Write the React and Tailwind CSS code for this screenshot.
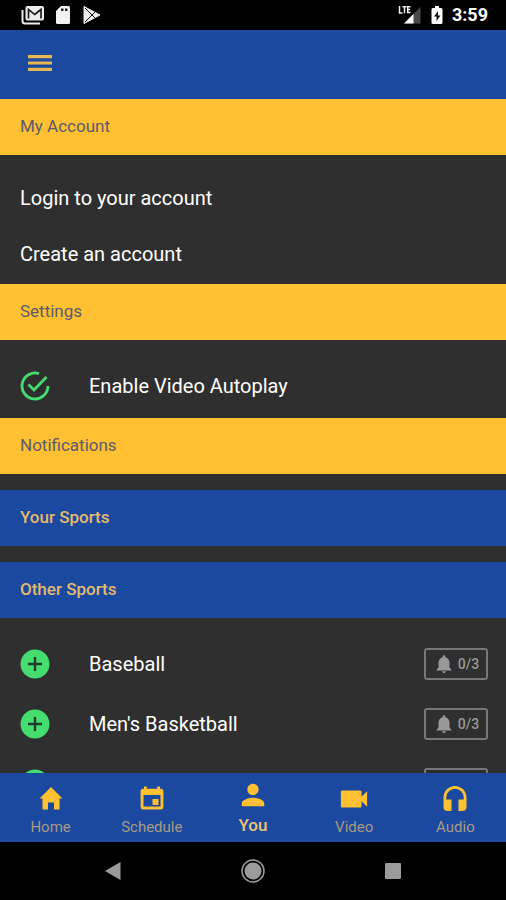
import React, { useState } from "react";
import { IoMdPerson, IoMdVideocam } from "react-icons/io";
import { MdNotifications } from "react-icons/md";

const SPORTS = ["Baseball", "Men's Basketball", "Women's Basketball"];

function HomeIcon(props) {
    return (
        <svg width="30" height="30" viewBox="0 0 30 30" fill="currentColor" {...props}>
            <path d="M15 3L3.500 14.600h3V25.500H12V18.500h6v7h5.500V14.600h3z" />
        </svg>
    );
}

function CalendarIcon(props) {
    return (
        <svg width="30" height="30" viewBox="0 0 30 30" fill="currentColor" {...props}>
            <path
                fillRule="evenodd"
                d="M7 2.500h2.800v2.200h10.400V2.500H23v2.200h1a2.400 2.400 0 0 1 2.400 2.400v16A2.400 2.400 0 0 1 24 25.500H6a2.400 2.400 0 0 1-2.400-2.400v-16A2.400 2.400 0 0 1 6 4.700h1zM6.500 11v11.600h17V11z"
            />
            <rect x="15.500" y="15" width="6" height="6" rx="0.500" />
        </svg>
    );
}

function HeadphonesIcon(props) {
    return (
        <svg width="30" height="30" viewBox="0 0 30 30" fill="currentColor" {...props}>
            <path d="M15 2C8.600 2 3.500 7.100 3.500 13.500v9.500a4 4 0 0 0 4 4h4V15.500H6.300v-2a8.700 8.700 0 0 1 17.400 0v2h-5.200V27h4a4 4 0 0 0 4-4v-9.500C26.500 7.100 21.400 2 15 2z" />
        </svg>
    );
}

const TABS = [
    { name: "Home", icon: HomeIcon },
    { name: "Schedule", icon: CalendarIcon },
    { name: "You", icon: IoMdPerson },
    { name: "Video", icon: IoMdVideocam },
    { name: "Audio", icon: HeadphonesIcon },
];

function StatusBar() {
    return (
        <div className="flex h-[30px] shrink-0 items-center bg-black pl-[21px] pr-[18px] text-white">
            <div className="flex flex-1 items-center gap-[10px]">
                <svg width="24" height="20" viewBox="0 0 24 20" fill="none">
                    <path d="M1.500 5v11a2.500 2.500 0 0 0 2.500 2.500h15" stroke="#ececec" strokeWidth="2" />
                    <rect x="4.500" y="1" width="18.500" height="14.500" rx="2" fill="#ececec" />
                    <path d="M7.500 13.500V4.500l6.200 5 6.300-5v9" stroke="#111" strokeWidth="1.600" />
                </svg>
                <svg width="16" height="20" viewBox="0 0 16 20">
                    <path d="M6 1h7.500a1.500 1.500 0 0 1 1.500 1.500v15a1.500 1.500 0 0 1-1.500 1.500h-11A1.500 1.500 0 0 1 1 17.500V6z" fill="#f2f2f2" />
                    <path d="M6 3.500h2.500v2.500H6zM10 3.500h2.500v2.500H10z" fill="#222" />
                </svg>
                <svg width="20" height="20" viewBox="0 0 20 20">
                    <path d="M3 1.500l16 8.500-16 8.500z" fill="#ececec" stroke="#ececec" strokeWidth="1" strokeLinejoin="round" />
                    <path d="M4 3l10 10M4 17l10-10" stroke="#111" strokeWidth="1" />
                </svg>
            </div>
            <div className="flex items-center gap-[9px]">
                <svg width="24" height="20" viewBox="0 0 24 20">
                    <path d="M22.500 2v16.500H6z" fill="#4a4a4a" />
                    <path d="M15.500 9v9.500H6z" fill="#fff" />
                    <path d="M1.500 1v7h3M4.500 1.800h4M6.500 1.800v6.500M12.500 1.800H9.700v5.800h2.800M9.700 4.600h2.500" stroke="#f0f0f0" strokeWidth="1.500" fill="none" />
                </svg>
                <svg width="12" height="20" viewBox="0 0 12 20">
                    <path d="M4 1h4v2h2a1.500 1.500 0 0 1 1.500 1.500v13A1.500 1.500 0 0 1 10 19H2a1.500 1.500 0 0 1-1.500-1.500v-13A1.500 1.500 0 0 1 2 3h2z" fill="#fff" />
                    <path d="M7 6l-4 5.500h2.500V16l4-5.500H7z" fill="#111" />
                </svg>
                <span className="text-lg font-bold leading-5">3:59</span>
            </div>
        </div>
    );
}

function SectionTitle({ children, blue }) {
    return (
        <h2
            className={
                blue
                    ? "flex h-14 items-center bg-[#1b499f] px-5 text-[17px] font-medium text-[#e5b96c]"
                    : "flex h-14 items-center bg-[#ffc031] px-5 text-[17px] text-[#5c5a70]"
            }
        >
            {children}
        </h2>
    );
}

function SportRow({ name }) {
    return (
        <li className="flex h-[60px] items-center pl-5 pr-[18px]">
            <button aria-label={"Add " + name}>
                <svg width="30" height="30" viewBox="0 0 30 30">
                    <circle cx="15" cy="15" r="14.500" fill="#46dd70" />
                    <path d="M15 8v14M8 15h14" stroke="#233a2a" strokeWidth="2.400" />
                </svg>
            </button>
            <span className="flex-1 pl-[39px]">{name}</span>
            <button
                aria-label={"Notifications for " + name}
                className="flex h-8 w-16 items-center justify-center gap-[3px] rounded-[3px] border-2 border-[#777] text-sm font-medium text-[#999]"
            >
                <MdNotifications size={22} />
                0/3
            </button>
        </li>
    );
}

export default function App() {
    const [autoplay, setAutoplay] = useState(true);
    const [tab, setTab] = useState("You");

    return (
        <div className="flex h-screen flex-col overflow-hidden bg-[#2f2f2f] font-[Roboto,sans-serif] text-white">
            <StatusBar />
            <header className="flex h-[69px] shrink-0 items-center bg-[#1b499f] px-7 pb-1 text-[#e5b750]">
                <button aria-label="Menu">
                    <svg width="24" height="18" viewBox="0 0 24 18" fill="currentColor">
                        <path d="M0 1h24v3.200H0zM0 7.400h24v3.200H0zM0 13.800h24V17H0z" />
                    </svg>
                </button>
            </header>

            <main className="min-h-0 flex-1 overflow-y-auto text-xl [scrollbar-width:none]">
                <SectionTitle>My Account</SectionTitle>
                <div className="pt-[15px] pb-[2px]">
                    <a href="#login" className="flex h-14 items-center px-5">
                        Login to your account
                    </a>
                    <a href="#create" className="flex h-14 items-center px-5">
                        Create an account
                    </a>
                </div>
                <SectionTitle>Settings</SectionTitle>
                <div className="pt-4 pb-[2px]">
                    <label className="flex h-[60px] items-center pl-5">
                        <input
                            type="checkbox"
                            className="sr-only"
                            checked={autoplay}
                            onChange={(e) => setAutoplay(e.target.checked)}
                        />
                        <svg
                            width="30"
                            height="30"
                            viewBox="0 0 30 30"
                            fill="none"
                            stroke="currentColor"
                            strokeWidth="2.800"
                            className={autoplay ? "text-[#46dd70]" : "text-[#777]"}
                        >
                            <path d="M19 2.600A13 13 0 1 0 28 15" />
                            <path d="M8.500 13.500l5.500 5.500L26.500 6" />
                        </svg>
                        <span className="pl-[39px]">Enable Video Autoplay</span>
                    </label>
                </div>
                <SectionTitle>Notifications</SectionTitle>
                <div className="flex flex-col gap-4 pt-4">
                    <SectionTitle blue>Your Sports</SectionTitle>
                    <SectionTitle blue>Other Sports</SectionTitle>
                </div>
                <ul className="pt-4">
                    {SPORTS.map((sport) => (
                        <SportRow key={sport} name={sport} />
                    ))}
                </ul>
            </main>

            <nav className="grid h-[69px] shrink-0 grid-cols-5 bg-[#1b499f]">
                {TABS.map(({ name, icon: Icon }) => (
                    <button
                        key={name}
                        onClick={() => setTab(name)}
                        className="flex flex-col items-center justify-end gap-[3px] pb-[5px]"
                    >
                        <Icon width="30" height="30" className="h-[30px] w-[30px] text-[#ffc031]" />
                        <span
                            className={
                                tab === name
                                    ? "text-[17px] leading-6 font-medium text-[#f0c274]"
                                    : "text-[15px] leading-5 text-[#a89a85]"
                            }
                        >
                            {name}
                        </span>
                    </button>
                ))}
            </nav>

            <div className="flex h-[58px] shrink-0 items-center justify-center gap-[116px] bg-black text-[#9b9b9b]">
                <button aria-label="Back">
                    <svg width="24" height="24" viewBox="0 0 24 24" fill="currentColor">
                        <path d="M4 12L19.500 3v18z" />
                    </svg>
                </button>
                <button aria-label="Home screen">
                    <svg width="24" height="24" viewBox="0 0 24 24" fill="currentColor">
                        <circle cx="12" cy="12" r="8.500" />
                        <circle cx="12" cy="12" r="11" fill="none" stroke="currentColor" strokeWidth="1.500" />
                    </svg>
                </button>
                <button aria-label="Recent apps">
                    <svg width="24" height="24" viewBox="0 0 24 24" fill="currentColor">
                        <rect x="4" y="4" width="16" height="16" rx="1" />
                    </svg>
                </button>
            </div>
        </div>
    );
}
